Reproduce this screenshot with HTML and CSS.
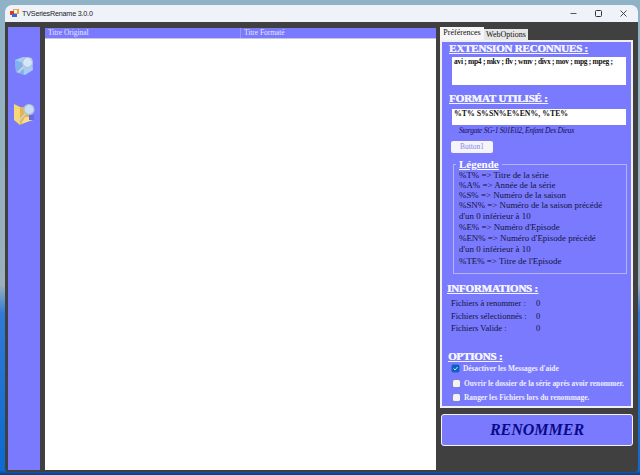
FILE: index.html
```html
<!DOCTYPE html>
<html lang="fr">
<head>
  <meta charset="UTF-8">
  <title>TVSeriesRename 3.0.0</title>
  <link rel="stylesheet" href="styles.css">
</head>
<body>

<div class="window">
  <!-- ========= TITLE BAR ========= -->
  <header class="titlebar">
    <svg class="app-icon" width="9" height="9" viewBox="0 0 9 9">
      <rect x="3" y="0" width="6" height="5" fill="#e8a83c"/>
      <rect x="0" y="2" width="4" height="4" fill="#d8392c"/>
      <rect x="2" y="5" width="5" height="3" fill="#2f6fd0"/>
      <rect x="4" y="1" width="3" height="3" fill="#f4f4f4"/>
    </svg>
    <span class="app-title">TVSeriesRename 3.0.0</span>
    <div class="win-buttons">
      <svg width="7" height="7" viewBox="0 0 7 7"><path d="M0.500 3.500h6" stroke="#555"/></svg>
      <svg width="7" height="7" viewBox="0 0 7 7"><rect x="0.500" y="0.500" width="6" height="6" rx="1" fill="none" stroke="#333"/></svg>
      <svg width="7" height="7" viewBox="0 0 7 7"><path d="M0.500 0.500l6 6M6.500 0.500l-6 6" stroke="#333" stroke-width="0.900"/></svg>
    </div>
  </header>

  <div class="client">
    <!-- ========= LEFT TOOLBAR ========= -->
    <nav class="toolbar">
      <svg class="tool" width="19" height="20" viewBox="0 0 19 20">
        <path d="M0 4l8-3 9 1 1 12-8 5-9-3z" fill="#a6cdf6"/>
        <path d="M0 4l8 3 1 12-8-3z" fill="#7fb2ee"/>
        <circle cx="12.500" cy="6.500" r="5" fill="#d4e6fa" stroke="#b4c0d2" stroke-width="1.200"/>
        <path d="M9 10.500l-6 6" stroke="#d0d0d4" stroke-width="1.800"/>
      </svg>
      <svg class="tool" width="21" height="22" viewBox="0 0 21 22">
        <path d="M0 1l6 3v18l-6-5z" fill="#f6d877"/>
        <path d="M6 4h9v14l-9 4z" fill="#e2b54e"/>
        <path d="M7 21l4-7h5l3 3z" fill="#f8de8c"/>
        <path d="M15 12h5v5h-5z" fill="#6a6ae0"/>
        <circle cx="15" cy="6.500" r="5" fill="#c9def5" stroke="#b4c0d2" stroke-width="1.200"/>
        <path d="M11.500 10.500l-6 7" stroke="#d0d0d4" stroke-width="1.800"/>
      </svg>
    </nav>

    <!-- ========= FILE LIST ========= -->
    <section class="list">
      <div class="list-head">
        <div class="col col-original">Titre Original</div>
        <div class="col">Titre Formaté</div>
      </div>
    </section>

    <!-- ========= RIGHT COLUMN ========= -->
    <aside class="side">
      <div class="tabs">
        <div class="tab tab-on">Préférences</div>
        <div class="tab">WebOptions</div>
      </div>

      <div class="panel">
        <h2 class="heading">EXTENSION RECONNUES :</h2>
        <div class="textbox textbox-tall">avi ; mp4 ; mkv ; flv ; wmv ; divx ; mov ; mpg ; mpeg ;</div>

        <h2 class="heading heading-format">FORMAT UTILISÉ :</h2>
        <div class="textbox textbox-short">%T% S%SN%E%EN%, %TE%</div>
        <p class="sample">Stargate SG-1 S01E02, Enfant Des Dieux</p>
        <div class="btn-small">Button1</div>

        <fieldset class="legend-box">
          <legend>Légende</legend>
          <p>%T% =&gt; Titre de la série</p>
          <p>%A% =&gt; Année de la série</p>
          <p>%S% =&gt; Numéro de la saison</p>
          <p class="tall">%SN% =&gt; Numéro de la saison précédé<br>d'un 0 inférieur à 10</p>
          <p class="tall">%E% =&gt; Numéro d'Episode</p>
          <p class="tall">%EN% =&gt; Numéro d'Episode précédé<br>d'un 0 inférieur à 10</p>
          <p class="tall last">%TE% =&gt; Titre de l'Episode</p>
        </fieldset>

        <h2 class="heading heading-info">INFORMATIONS :</h2>
        <div class="info">
          <span>Fichiers à renommer :</span><span>0</span>
          <span>Fichiers sélectionnés :</span><span>0</span>
          <span>Fichiers Valide :</span><span>0</span>
        </div>

        <h2 class="heading heading-options">OPTIONS :</h2>
        <label class="option"><span class="check check-on">
          <svg width="7" height="7" viewBox="0 0 7 7"><path d="M1.500 3.500l1.500 1.500 2.500-3" fill="none" stroke="#fff" stroke-width="0.800"/></svg>
        </span>Désactiver les Messages d'aide</label>
        <label class="option"><span class="check"></span>Ouvrir le dossier de la série après avoir renommer.</label>
        <label class="option"><span class="check"></span>Ranger les Fichiers lors du renommage.</label>
      </div>

      <div class="rename">RENOMMER</div>
    </aside>
  </div>
</div>

</body>
</html>
```

FILE: styles.css
```css
/* ---------- Page ---------- */
html, body { margin: 0; padding: 0; height: 100%; overflow: hidden; }
body {
  background: linear-gradient(180deg, #8fb2c6 0%, #9ab0bc 60%, #2f7ad8 66%, #0a6ad0 99%, #123a78 100%);
  padding: 5px 2px 3px 5px;
  box-sizing: border-box;
  font-family: "Liberation Serif", "Times New Roman", serif;
}

.window { height: 100%; display: flex; flex-direction: column; border-radius: 7px 7px 4px 4px; overflow: hidden; }

/* Title bar */
.titlebar { height: 17px; background: #eff3f9; display: flex; align-items: center; padding-left: 5px; flex-shrink: 0; }
.app-icon { margin-right: 3px; }
.app-title { font-family: "Liberation Sans", Arial, sans-serif; font-size: 7.200px; letter-spacing: -0.200px; color: #222; }
.win-buttons { margin-left: auto; display: flex; gap: 18px; padding-right: 11px; }

/* Client area */
.client { flex: 1; min-height: 0; background: #404040; display: flex; padding: 5px 0 2px 3px; }

.toolbar { width: 32px; flex-shrink: 0; background: #7a7aff; display: flex; flex-direction: column; align-items: center; padding-top: 29px; gap: 27px; box-sizing: border-box; }

/* List */
.list { width: 391px; margin-left: 5px; background: #fff; flex-shrink: 0; margin-top: 1px; }
.list-head { height: 10px; background: #7a7aff; border-bottom: 1px solid #c8c8d8; display: flex; color: #e6e6f4; font-size: 7.400px; line-height: 10px; }
.col { padding-left: 3px; }
.col-original { width: 192px; border-right: 1px solid #9a9ae8; }

/* Right column */
.side { width: 194px; margin-left: 4px; flex-shrink: 0; }
.tabs { display: flex; height: 13px; align-items: flex-end; font-size: 8px; }
.tab { background: #e6e6e6; color: #111; width: 44px; box-sizing: border-box; text-align: center; height: 11px; line-height: 11px; }
.tab-on { background: #f6f6f6; height: 13px; line-height: 12px; }

.panel { background: #7a7aff; border: 2px solid #f0f0f0; height: 364px; margin-right: 1px; color: #14143a; }

.heading { margin: 0 0 0 7px; font-weight: bold; font-size: 11px; letter-spacing: -0.200px; line-height: 12px; color: #f4f4ff; text-decoration: underline; text-shadow: 0.500px 0 0 #f4f4ff; }
.heading-format { margin-top: 7px; }
.heading-info { margin: 8px 0 0 5px; }
.heading-options { margin: 15px 0 0 6px; }

.textbox { background: #fff; color: #111; font-weight: bold; padding-left: 2px; margin: 3px 0 0 10px; width: 174px; box-sizing: border-box; line-height: 10px; white-space: nowrap; }
.textbox-tall { height: 28px; font-size: 7.500px; letter-spacing: -0.300px; }
.textbox-short { height: 16px; font-size: 7.800px; margin-top: 5px; }

.sample { margin: 0 0 0 17px; font-size: 7.500px; letter-spacing: -0.250px; font-style: italic; color: #111150; line-height: 12px; }
.btn-small { width: 42px; height: 12px; line-height: 12px; margin: 4px 0 0 9px; background: #f4f4fa; color: #8a8ae8; font-size: 7.500px; text-align: center; border-radius: 2px; }

.legend-box { margin: 5px 0 0 11px; width: 174px; box-sizing: border-box; padding: 0 0 6px 5px; border: 1px solid #b4b4f4; min-width: 0; }
.legend-box legend { font-size: 11px; font-weight: bold; text-decoration: underline; color: #fff; padding: 0 3px; margin-left: -3px; line-height: 12px; }
.legend-box p { margin: 0; font-size: 8.900px; line-height: 10px; white-space: nowrap; }
.legend-box p.tall { line-height: 11px; }
.legend-box p.last { margin-top: 1px; }

.info { display: grid; grid-template-columns: 85px 1fr; margin: 4px 0 0 9px; font-size: 8.500px; row-gap: 1px; line-height: 11.500px; }

.option { display: flex; align-items: center; gap: 4px; font-size: 7.400px; font-weight: bold; color: #eeeefc; height: 14px; margin: 0.500px 0 0 11px; white-space: nowrap; }
.heading + .option { margin-top: 0; margin-left: 10px; }
.check { width: 7px; height: 7px; flex-shrink: 0; background: #f2f2f2; box-shadow: 0 0 0 0.500px #8888aa; border-radius: 1.500px; display: flex; align-items: center; justify-content: center; }
.check-on { background: #0b62c0; box-shadow: 0 0 0 0.500px #0b62c0; }

.rename { margin: 6px 1px 0 1px; height: 32px; box-sizing: border-box; line-height: 29px; background: #7a7aff; border: 1.500px solid #f4f4f4; border-radius: 3px; text-align: center; font-size: 16px; font-weight: bold; font-style: italic; color: #0a0a88; }
```
